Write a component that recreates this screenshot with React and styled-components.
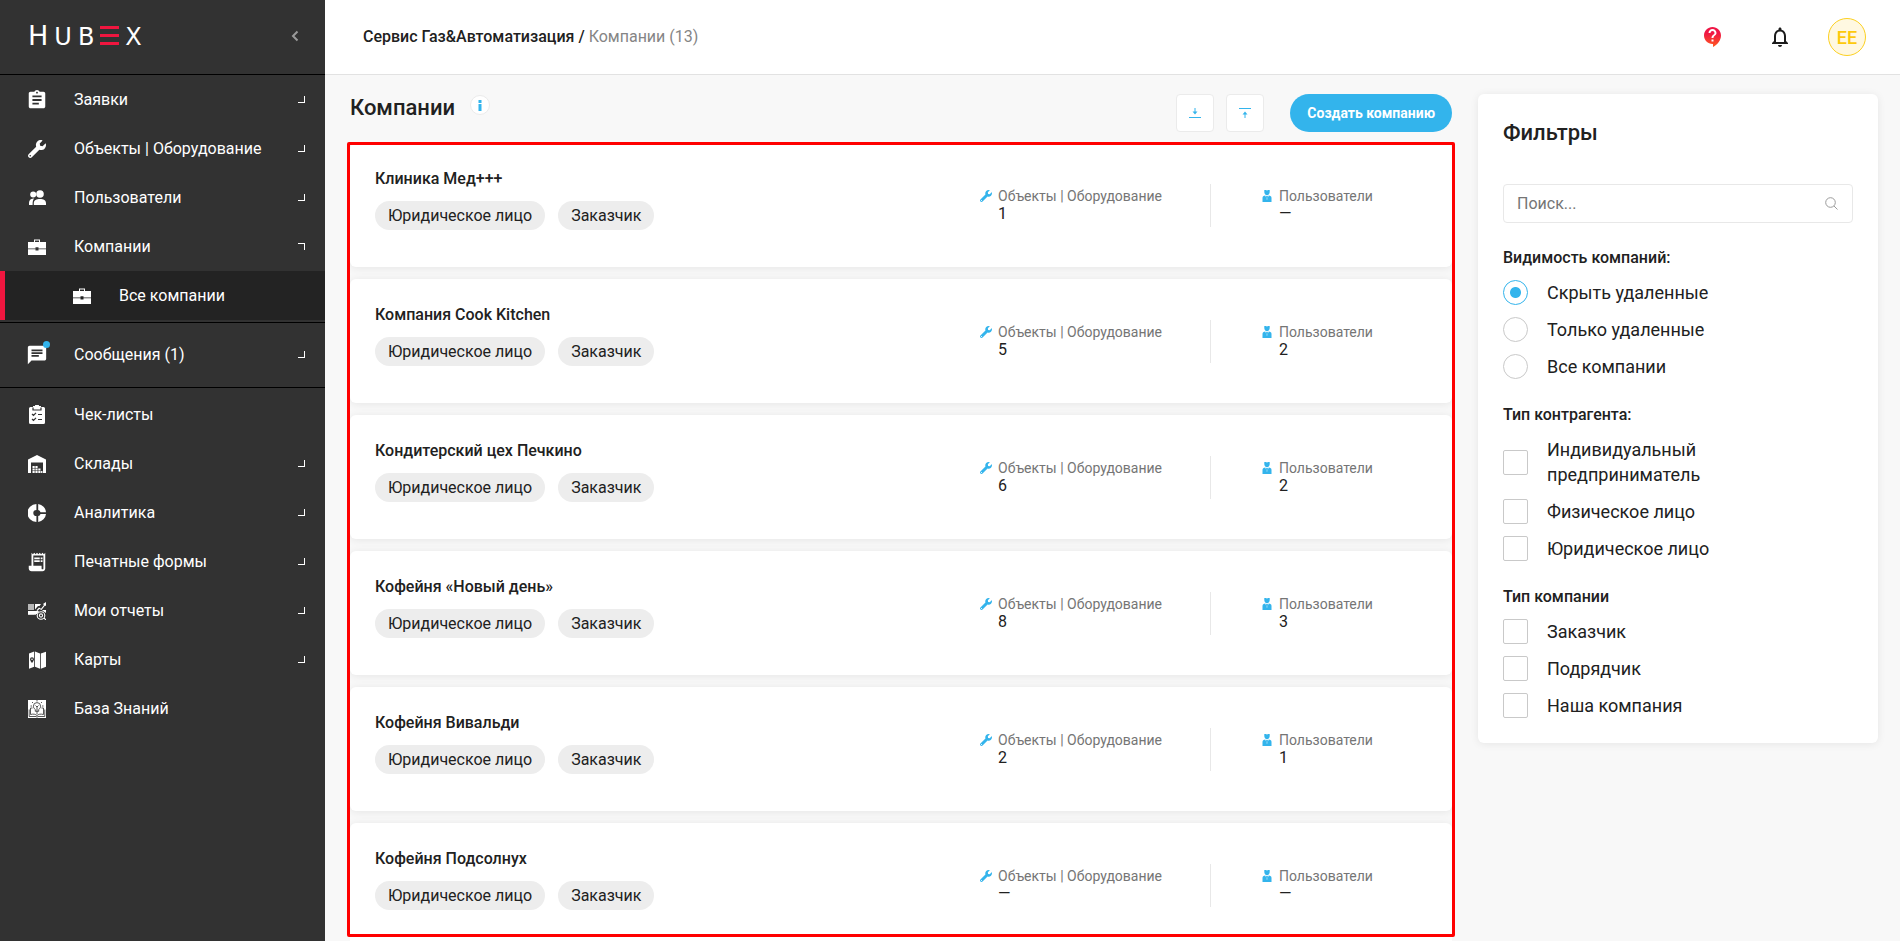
import React from "react";
import styled, { createGlobalStyle, css } from "styled-components";
import { MdAssignment, MdChat, MdReceiptLong, MdNotificationsNone } from "react-icons/md";
import { FaWrench } from "react-icons/fa";

const Global = createGlobalStyle`
  *, *::before, *::after { box-sizing: border-box; }
  body {
    margin: 0;
    background: #f8f8f8;
    color: #212121;
    font-family: Roboto, "Open Sans", sans-serif;
    font-size: 16px;
  }
  button, input { font-family: inherit; }
`;

const Shell = styled.div`
  display: flex;
  height: 100vh;
  overflow: hidden;
`;

/* ---------- Sidebar ---------- */
const Sidebar = styled.aside`
  flex: 0 0 325px;
  background: #323232;
  color: #fff;
`;
const Brand = styled.div`
  display: flex;
  align-items: center;
  justify-content: space-between;
  height: 75px;
  padding: 0 22px 2px 28px;
  border-bottom: 1px solid #000;
`;
const Wordmark = styled.a`
  display: flex;
  align-items: baseline;
  gap: 6px;
  color: #fff;
  font-family: "DejaVu Sans", sans-serif;
  font-size: 24px;
  line-height: 32px;
  text-decoration: none;
`;
const Initial = styled.span`
  font-size: 27px;
`;
const CollapseButton = styled.button`
  display: flex;
  padding: 4px;
  border: 0;
  background: none;
  color: #9a9a9a;
  cursor: pointer;
`;
const NavGroup = styled.ul`
  list-style: none;
  margin: 0;
  padding: ${(p) => p.$pad || "0"};
  border-bottom: ${(p) => (p.$line ? "1px solid #000" : "0")};
`;
const NavLink = styled.a`
  display: flex;
  align-items: center;
  height: 49px;
  padding: 0 20px 0 28px;
  color: #fff;
  text-decoration: none;
  ${(p) =>
    p.$sub &&
    css`
      padding-left: 68px;
      background: #232323;
      border-left: 5px solid #f0163f;
    `}
`;
const NavIcon = styled.span`
  position: relative;
  display: flex;
  width: 18px;
  margin-right: 28px;
`;
const Dot = styled.i`
  position: absolute;
  top: -3px;
  right: -4px;
  width: 7px;
  height: 7px;
  border-radius: 50%;
  background: #33b4ec;
`;
const NavText = styled.span`
  flex: 1;
  line-height: 20px;
`;
const Corner = styled.i`
  width: 7px;
  height: 7px;
  border: 0 solid #fff;
  border-width: ${(p) => (p.$open ? "1px 1px 0 0" : "0 1px 1px 0")};
`;

/* ---------- Header ---------- */
const Page = styled.div`
  flex: 1;
  min-width: 0;
  display: flex;
  flex-direction: column;
`;
const Header = styled.header`
  display: flex;
  align-items: center;
  justify-content: space-between;
  flex: 0 0 75px;
  padding: 0 34px 0 38px;
  background: #fff;
  border-bottom: 1px solid #e2e2e2;
`;
const Crumbs = styled.nav`
  line-height: 20px;
  font-weight: 500;
  a { color: inherit; text-decoration: none; }
  span { color: #858585; font-weight: 400; }
`;
const HeaderTools = styled.div`
  display: flex;
  align-items: center;
`;
const ToolButton = styled.button`
  display: flex;
  margin-right: 43px;
  padding: 0;
  border: 0;
  background: none;
  color: #1c1c1c;
  cursor: pointer;
  & + & { margin-right: 36px; }
`;
const Avatar = styled.button`
  width: 38px;
  height: 38px;
  padding: 0;
  border: 1px solid #fcd021;
  border-radius: 50%;
  background: #fff8e1;
  color: #fdc90b;
  font-size: 18px;
  font-weight: 500;
`;

/* ---------- Content ---------- */
const Body = styled.div`
  flex: 1;
  min-height: 0;
  display: flex;
  align-items: stretch;
  gap: 26px;
  padding: 0 22px 0 25px;
`;
const Main = styled.main`
  flex: 1;
  min-width: 0;
  display: flex;
  flex-direction: column;
`;
const TitleBar = styled.div`
  display: flex;
  align-items: center;
  gap: 12px;
  padding: 19px 0 11px;
`;
const Title = styled.h1`
  display: flex;
  align-items: flex-start;
  gap: 15px;
  flex: 1;
  margin: 0;
  padding-bottom: 10px;
  font-size: 22px;
  line-height: 26px;
  font-weight: 500;
`;
const InfoButton = styled.button`
  display: flex;
  align-items: center;
  justify-content: center;
  width: 20px;
  height: 20px;
  padding: 0;
  border: 1px solid #ebebeb;
  border-radius: 50%;
  background: #fff;
`;
const SquareButton = styled.button`
  display: flex;
  align-items: center;
  justify-content: center;
  width: 38px;
  height: 38px;
  padding: 0;
  border: 1px solid #ebebeb;
  border-radius: 4px;
  background: #fff;
`;
const CreateButton = styled.button`
  height: 38px;
  margin-left: 14px;
  padding: 0 17px;
  border: 0;
  border-radius: 19px;
  background: #33b4ec;
  color: #fff;
  font-size: 14px;
  font-weight: 700;
`;
const ListArea = styled.div`
  position: relative;
  flex: 1;
  min-height: 0;
`;
const List = styled.div`
  display: flex;
  flex-direction: column;
  gap: 12px;
  height: 100%;
  overflow: hidden;
`;
const Outline = styled.div`
  position: absolute;
  inset: -1px -3px 4px;
  border: 3px solid #f00;
  border-radius: 2px;
  pointer-events: none;
`;
const Card = styled.article`
  display: flex;
  align-items: center;
  flex: 0 0 124px;
  padding: 0 0 0 25px;
  border-radius: 6px;
  background: #fff;
  box-shadow: 0 1px 8px rgba(0, 0, 0, 0.08);
`;
const Info = styled.div`
  flex: 1;
  padding-bottom: 12px;
`;
const Name = styled.h2`
  margin: 0 0 12px;
  font-size: 16px;
  line-height: 20px;
  font-weight: 500;
`;
const Tags = styled.div`
  display: flex;
  gap: 13px;
`;
const Tag = styled.span`
  padding: 0 13px;
  border-radius: 15px;
  background: #ededed;
  font-size: 16px;
  line-height: 29px;
`;
const Stats = styled.dl`
  display: flex;
  margin: 0;
`;
const Stat = styled.div`
  display: grid;
  grid-template-columns: 18px 1fr;
  align-content: start;
  width: ${(p) => p.$width};
  height: 43px;
  padding: 3px 0 0 ${(p) => p.$indent || "0"};
  border-left: ${(p) => (p.$line ? "1px solid #e8e8e8" : "0")};
  color: #33b4ec;
  svg { margin-top: 3px; }
  dt {
    color: #757575;
    font-size: 14px;
    line-height: 18px;
  }
  dd {
    grid-column: 2;
    margin: 0;
    color: #212121;
    font-size: 16px;
    line-height: 17px;
  }
`;

/* ---------- Filters ---------- */
const Filters = styled.aside`
  flex: 0 0 400px;
  align-self: flex-start;
  margin-top: 19px;
  padding: 25px;
  border-radius: 6px;
  background: #fff;
  box-shadow: 0 1px 8px rgba(0, 0, 0, 0.08);
`;
const FiltersTitle = styled.h2`
  margin: 0 0 38px;
  font-size: 22px;
  line-height: 27px;
  font-weight: 500;
`;
const SearchBox = styled.label`
  display: flex;
  align-items: center;
  height: 39px;
  margin-bottom: 25px;
  padding: 0 14px 0 13px;
  border: 1px solid #e8e8e8;
  border-radius: 4px;
  color: #9b9b9b;
`;
const SearchInput = styled.input`
  flex: 1;
  min-width: 0;
  padding: 0;
  border: 0;
  outline: 0;
  background: none;
  font-size: 16px;
  &::placeholder { color: #757575; opacity: 1; }
`;
const Group = styled.fieldset`
  margin: 0;
  padding: 0;
  border: 0;
  & + & { margin-top: 26px; }
`;
const Legend = styled.legend`
  padding: 0;
  margin-bottom: 12px;
  font-size: 16px;
  line-height: 20px;
  font-weight: 500;
`;
const Option = styled.label`
  display: flex;
  align-items: center;
  gap: 19px;
  font-size: 18px;
  line-height: 25px;
  & + & { margin-top: 12px; }
  span { max-width: 200px; }
`;
const Mark = styled.input`
  appearance: none;
  flex: none;
  width: 25px;
  height: 25px;
  margin: 0;
  border: 1px solid #c9c9c9;
  border-radius: ${(p) => (p.type === "radio" ? "50%" : "2px")};
  background: #fff;
  &:checked {
    border-color: #33b4ec;
    background: radial-gradient(circle, #33b4ec 0 5px, #fff 6px);
  }
`;

/* ---------- Drawings ---------- */
const Svg = ({ children, w = 18, h = 18, box, ...rest }) => (
  <svg width={w} height={h} viewBox={box || `0 0 ${w} ${h}`} fill="currentColor" aria-hidden="true" {...rest}>
    {children}
  </svg>
);

const Logo = () => (
  <Wordmark href="#" aria-label="HubEx">
    <Initial>H</Initial>
    <span>U</span>
    <span>B</span>
    <svg width="19" height="19" viewBox="0 0 19 19" fill="#f0163f" aria-hidden="true">
      <path d="M0 0h19v3H0zM0 8h19v3H0zM0 16h19v3H0z" />
    </svg>
    <span>X</span>
  </Wordmark>
);
const PeopleIcon = () => (
  <Svg>
    <circle cx="5.2" cy="5.6" r="3" />
    <circle cx="12" cy="5" r="3.8" />
    <path d="M1 16v-2.2C1 11 3 9.7 6.2 9.6 5 10.8 4.600 12.500 4.600 16zM5.800 16v-1.800c0-3 2.700-4.300 6.200-4.300s6 1.300 6 4.300V16z" />
  </Svg>
);
const CaseIcon = () => (
  <Svg>
    <path d="M6 4V1.500h6V4h-1V2.500H7V4zM0 4h18v6.400h-7.500V9.200h-3v1.200H0zM0 11.200h7.500v1.300h3v-1.300H18V17H0z" />
  </Svg>
);
const ChecklistIcon = () => (
  <Svg h={19}>
    <path d="M2.500 2H5V1h2a2 2 0 0 1 4 0h2v1h2.500A1.500 1.500 0 0 1 17 3.500v14a1.500 1.500 0 0 1-1.500 1.500h-13A1.500 1.500 0 0 1 1 17.500v-14A1.500 1.500 0 0 1 2.500 2z" />
    <path d="M5 2.500V5h8V2.500M4 9l1.500 1.500L8 7.800M10 9.500h4M4 14l1.500 1.500L8 12.800M10 14.500h4" fill="none" stroke="#323232" strokeWidth="1.200" />
  </Svg>
);
const WarehouseIcon = () => (
  <Svg>
    <path d="M0 18V4.500L9 0l9 4.500V18h-3V7.500H3V18z" />
    <path d="M4.500 11h2.200v2H4.500zM7.400 11h2.200v2H7.400zM4.500 13.600h2.200v1.800H4.500zM7.400 13.600h2.200v1.800H7.400zM10.300 13.600h2.200v1.800h-2.200zM4.500 16h2.200v2H4.500zM7.400 16h2.200v2H7.400zM10.300 16h2.200v2h-2.200zM13.100 16h1.300v2h-1.300z" />
  </Svg>
);
const DonutIcon = () => (
  <Svg>
    <path d="M8.400 0v5.900a3.100 3.100 0 0 0 0 6.200V18A9 9 0 0 1 8.400 0zM10.200 0A9 9 0 0 1 18 8.200h-5.500a3 3 0 0 0-2.300-2.300zM18 10a9 9 0 0 1-7.800 8v-5.900a3 3 0 0 0 2.300-2.100z" />
  </Svg>
);
const ReportIcon = () => (
  <Svg>
    <path opacity=".65" d="M0 2h6v6H0z" />
    <path d="M7 2h6l-1.500 2H10L7 7.500zM0 9h11l-2 3H0zM8.500 8.300 11 5.500l2 1.200 3-3.700-1-1 3-2v4l-1-.5-3.500 4.600-2.200-1.200-1.800 2zM14 8h4v3l-3-2z" />
    <path d="M0 12.500h8M1 10v3M3 11v2M5 10v3" stroke="currentColor" strokeWidth=".7" fill="none" />
    <g fill="none" stroke="currentColor" strokeWidth="1.100">
      <circle cx="13" cy="13.500" r="3.800" />
      <circle cx="13" cy="13.500" r="1.600" />
      <path d="m16 16 2 2" />
    </g>
  </Svg>
);
const MapIcon = () => (
  <Svg>
    <path d="M1 2.500 6.200.5v15.200L1 17.700zM7 .5l5 2v15.200l-5-2zM12.800 2.500 18 .8v15l-5.200 1.900z" />
    <path d="M4 12C2.300 9.800 2 9 2 8.200a2 2 0 0 1 4 0c0 .8-.3 1.600-2 3.800z" fill="#323232" />
    <circle cx="4" cy="8.200" r=".8" />
  </Svg>
);
const KnowledgeIcon = () => (
  <Svg>
    <path d="M0 0h18v18H0z" />
    <g fill="none" stroke="#444" strokeWidth=".9">
      <path d="M7.300 9.500C5.800 8.300 5.400 7.400 5.400 6.200a3.600 3.600 0 0 1 7.200 0c0 1.200-.4 2.100-1.900 3.300v1.800H7.300zM9 6v8M7.500 5.500 9 7l1.500-1.500M9 0v1.500M4 2l1 1M14 2l-1 1M2.500 6H4M14 6h1.500" />
      <path d="M4.500 8H2.500v6.500c3-.8 5-.3 6.500 1 1.500-1.300 3.500-1.800 6.500-1V8h-2M1.200 9.500v7H8l1 .7 1-.7h6.800v-7" />
    </g>
  </Svg>
);
const PersonIcon = () => (
  <Svg w={12} h={12}>
    <path d="M3.300 0h1.500L6 .5 7.200 0h1.500v2c0 2-1.200 3.200-2.700 3.200S3.300 4 3.300 2zM1.500 12V8c0-1.600 1-2.400 2.800-2.500L6 10l1.700-4.500c1.800.1 2.800.9 2.800 2.500v4zM5.300 6h1.400l.3 1-1 2.200L5 7z" />
  </Svg>
);
const HelpIcon = () => (
  <Svg w={24} h={24}>
    <defs>
      <linearGradient id="help" x1="0" y1="0" x2="0" y2="1">
        <stop offset=".3" stopColor="#ef1746" />
        <stop offset="1" stopColor="#ff5a1f" />
      </linearGradient>
    </defs>
    <path fill="url(#help)" d="M11.500 2C6.810 2 3 5.810 3 10.500S6.810 19 11.500 19h.5v3c4.860-2.340 8-7 8-11.500C20 5.810 16.190 2 11.500 2zm1 14.500h-2v-2h2v2zm0-3.500h-2c0-3.250 3-3 3-5 0-1.100-.9-2-2-2s-2 .9-2 2h-2c0-2.210 1.790-4 4-4s4 1.790 4 4c0 2.500-3 2.750-3 5z" />
  </Svg>
);

const navGroups = [
  {
    line: true,
    pad: "0 0 2px",
    items: [
      { label: "Заявки", icon: <MdAssignment size={22} style={{ margin: "0 -2px" }} />, arrow: true },
      { label: "Объекты | Оборудование", icon: <FaWrench size={18} />, arrow: true },
      { label: "Пользователи", icon: <PeopleIcon />, arrow: true },
      { label: "Компании", icon: <CaseIcon />, arrow: true, open: true },
      { label: "Все компании", icon: <CaseIcon />, sub: true },
    ],
  },
  {
    line: true,
    pad: "7px 0 8px",
    items: [{ label: "Сообщения (1)", icon: <MdChat size={22} style={{ margin: "0 -2px" }} />, arrow: true, dot: true }],
  },
  {
    pad: "2px 0 0",
    items: [
      { label: "Чек-листы", icon: <ChecklistIcon /> },
      { label: "Склады", icon: <WarehouseIcon />, arrow: true },
      { label: "Аналитика", icon: <DonutIcon />, arrow: true },
      { label: "Печатные формы", icon: <MdReceiptLong size={22} style={{ margin: "0 -2px" }} />, arrow: true },
      { label: "Мои отчеты", icon: <ReportIcon />, arrow: true },
      { label: "Карты", icon: <MapIcon />, arrow: true },
      { label: "База Знаний", icon: <KnowledgeIcon /> },
    ],
  },
];

const companies = [
  { name: "Клиника Мед+++", objects: "1", users: "—" },
  { name: "Компания Cook Kitchen", objects: "5", users: "2" },
  { name: "Кондитерский цех Печкино", objects: "6", users: "2" },
  { name: "Кофейня «Новый день»", objects: "8", users: "3" },
  { name: "Кофейня Вивальди", objects: "2", users: "1" },
  { name: "Кофейня Подсолнух", objects: "—", users: "—" },
];

const filterGroups = [
  { title: "Видимость компаний:", type: "radio", options: ["Скрыть удаленные", "Только удаленные", "Все компании"] },
  { title: "Тип контрагента:", type: "checkbox", options: ["Индивидуальный предприниматель", "Физическое лицо", "Юридическое лицо"] },
  { title: "Тип компании", type: "checkbox", options: ["Заказчик", "Подрядчик", "Наша компания"] },
];

export default function App() {
  return (
    <Shell>
      <Global />
      <Sidebar>
        <Brand>
          <Logo />
          <CollapseButton aria-label="Свернуть меню">
            <Svg w={8} h={12}>
              <path d="M6.500 1.500 2 6l4.500 4.500" fill="none" stroke="currentColor" strokeWidth="2" />
            </Svg>
          </CollapseButton>
        </Brand>
        <nav>
          {navGroups.map((group, i) => (
            <NavGroup key={i} $line={group.line} $pad={group.pad}>
              {group.items.map((item) => (
                <li key={item.label}>
                  <NavLink href="#" $sub={item.sub}>
                    <NavIcon>
                      {item.icon}
                      {item.dot && <Dot />}
                    </NavIcon>
                    <NavText>{item.label}</NavText>
                    {item.arrow && <Corner $open={item.open} />}
                  </NavLink>
                </li>
              ))}
            </NavGroup>
          ))}
        </nav>
      </Sidebar>

      <Page>
        <Header>
          <Crumbs>
            <a href="#">Сервис Газ&amp;Автоматизация</a> / <span>Компании (13)</span>
          </Crumbs>
          <HeaderTools>
            <ToolButton aria-label="Помощь"><HelpIcon /></ToolButton>
            <ToolButton aria-label="Уведомления"><MdNotificationsNone size={24} /></ToolButton>
            <Avatar>EE</Avatar>
          </HeaderTools>
        </Header>

        <Body>
          <Main>
            <TitleBar>
              <Title>
                Компании
                <InfoButton aria-label="Справка">
                  <Svg w={4} h={11}>
                    <path fill="#33b4ec" d="M.5 0h3v3h-3zM.5 4h3v7h-3z" />
                  </Svg>
                </InfoButton>
              </Title>
              <SquareButton aria-label="Импорт">
                <Svg w={12} h={12}>
                  <path d="M6 1v4M0 10.500h12" stroke="#33b4ec" strokeWidth="1" />
                  <path fill="#33b4ec" d="M3.500 4.500h5L6 7.500z" />
                </Svg>
              </SquareButton>
              <SquareButton aria-label="Экспорт">
                <Svg w={12} h={12}>
                  <path d="M6 11V7M0 1.500h12" stroke="#33b4ec" strokeWidth="1" />
                  <path fill="#33b4ec" d="M3.500 7.500h5L6 4.500z" />
                </Svg>
              </SquareButton>
              <CreateButton>Создать компанию</CreateButton>
            </TitleBar>
            <ListArea>
              <List>
                {companies.map((c) => (
                  <Card key={c.name}>
                    <Info>
                      <Name>{c.name}</Name>
                      <Tags>
                        <Tag>Юридическое лицо</Tag>
                        <Tag>Заказчик</Tag>
                      </Tags>
                    </Info>
                    <Stats>
                      <Stat $width="230px">
                        <FaWrench size={12} />
                        <dt>Объекты | Оборудование</dt>
                        <dd>{c.objects}</dd>
                      </Stat>
                      <Stat $width="242px" $indent="50px" $line>
                        <PersonIcon />
                        <dt>Пользователи</dt>
                        <dd>{c.users}</dd>
                      </Stat>
                    </Stats>
                  </Card>
                ))}
              </List>
              <Outline />
            </ListArea>
          </Main>

          <Filters>
            <FiltersTitle>Фильтры</FiltersTitle>
            <SearchBox>
              <SearchInput type="text" placeholder="Поиск..." aria-label="Поиск" />
              <Svg w={13} h={13}>
                <g fill="none" stroke="currentColor">
                  <circle cx="5.500" cy="5.500" r="4.800" />
                  <path d="m9 9 3.500 3.500" />
                </g>
              </Svg>
            </SearchBox>
            {filterGroups.map((g) => (
              <Group key={g.title}>
                <Legend>{g.title}</Legend>
                {g.options.map((o, i) => (
                  <Option key={o}>
                    <Mark type={g.type} name={g.title} defaultChecked={g.type === "radio" && i === 0} />
                    <span>{o}</span>
                  </Option>
                ))}
              </Group>
            ))}
          </Filters>
        </Body>
      </Page>
    </Shell>
  );
}
